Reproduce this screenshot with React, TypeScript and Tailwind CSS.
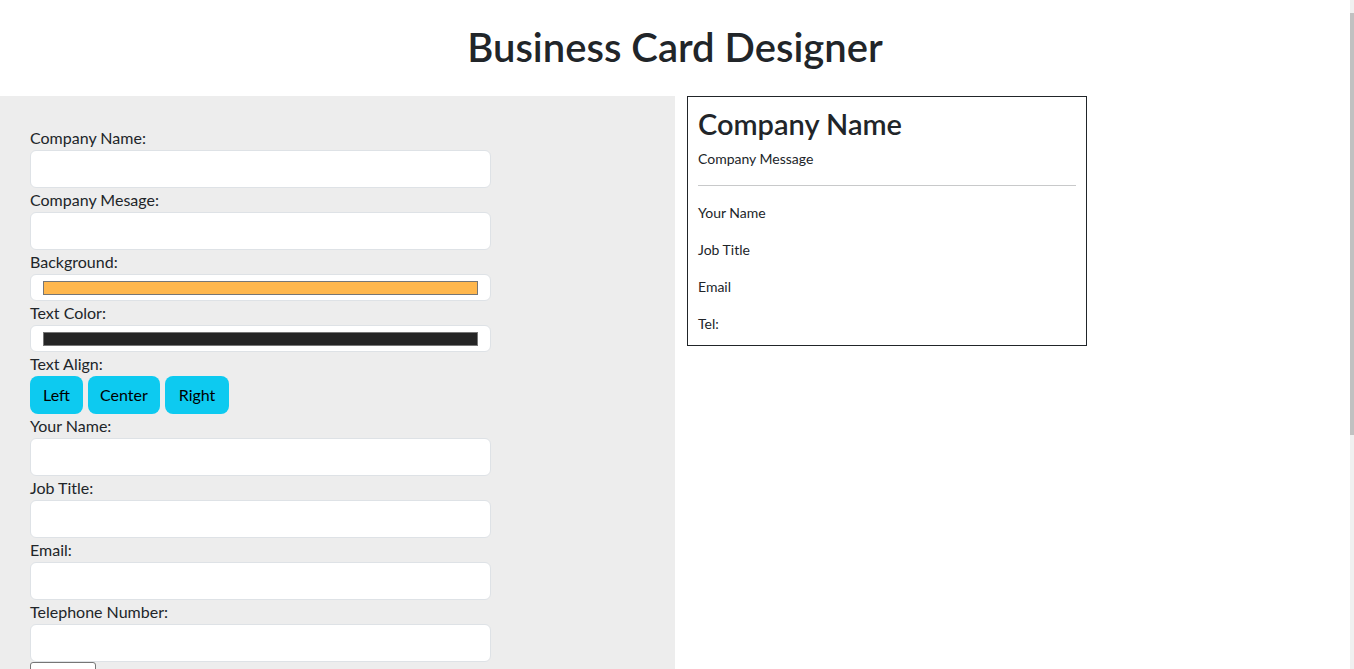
const fieldClass =
  'block w-[461px] h-[38px] bg-white border border-[#dee2e6] rounded-[6px]';

const Field = ({ label }: { label: string }) => (
  <div>
    <label className="block leading-6">{label}</label>
    <input type="text" className={fieldClass} />
  </div>
);

const ColorField = ({ label, color }: { label: string; color: string }) => (
  <div>
    <label className="block leading-6">{label}</label>
    <div className="w-[461px] h-[27px] bg-white border border-[#dee2e6] rounded-[6px] pl-3 pr-3 pt-[6px]">
      <div className={`h-[14px] border border-[#767676] ${color}`} />
    </div>
  </div>
);

const App = () => {
  return (
    <div
      className="flex h-[669px] overflow-hidden bg-white text-[#212529]"
      style={{ fontFamily: 'Lato, "Open Sans", sans-serif' }}
    >
      <div className="flex-1">
        <header className="h-[96px] flex items-center justify-center pb-[3px]">
          <h1 className="text-[40px] font-semibold leading-tight">Business Card Designer</h1>
        </header>

        <div className="grid grid-cols-2">
          <form className="bg-[#ededed] pt-[30px] px-[30px] pb-10 text-base">
            <Field label="Company Name:" />
            <Field label="Company Mesage:" />
            <ColorField label="Background:" color="bg-[#ffb74d]" />
            <ColorField label="Text Color:" color="bg-[#252525]" />
            <div>
              <label className="block leading-6">Text Align:</label>
              <div className="flex gap-[5px]">
                <button type="button" className="h-[38px] px-[13px] rounded-lg bg-[#0dcaf0] text-black">
                  Left
                </button>
                <button type="button" className="h-[38px] px-3 rounded-lg bg-[#0dcaf0] text-black">
                  Center
                </button>
                <button type="button" className="h-[38px] px-[14px] rounded-lg bg-[#0dcaf0] text-black">
                  Right
                </button>
              </div>
            </div>
            <Field label="Your Name:" />
            <Field label="Job Title:" />
            <Field label="Email:" />
            <Field label="Telephone Number:" />
            <button
              type="button"
              aria-label="Save"
              className="block h-[38px] w-[66px] bg-white border border-[#767676] rounded-[3px]"
            />
          </form>

          <div className="pl-3">
            <div className="w-[400px] h-[250px] border border-[#212529] p-[10px] overflow-hidden">
              <h3 className="text-[29px] font-semibold leading-[1.2] mb-[6px]">Company Name</h3>
              <p className="text-sm leading-[21px]">Company Message</p>
              <hr className="my-4 border-[#c8c9ca]" />
              <p className="text-sm leading-[21px] mb-4">Your Name</p>
              <p className="text-sm leading-[21px] mb-4">Job Title</p>
              <p className="text-sm leading-[21px] mb-4">Email</p>
              <p className="text-sm leading-[21px]">Tel:</p>
            </div>
          </div>
        </div>
      </div>

      <div className="w-1 bg-[#f0f0f0] pt-[13px]">
        <div className="h-[422px] bg-[#c1c1c1]" />
      </div>
    </div>
  );
};

export default App;
